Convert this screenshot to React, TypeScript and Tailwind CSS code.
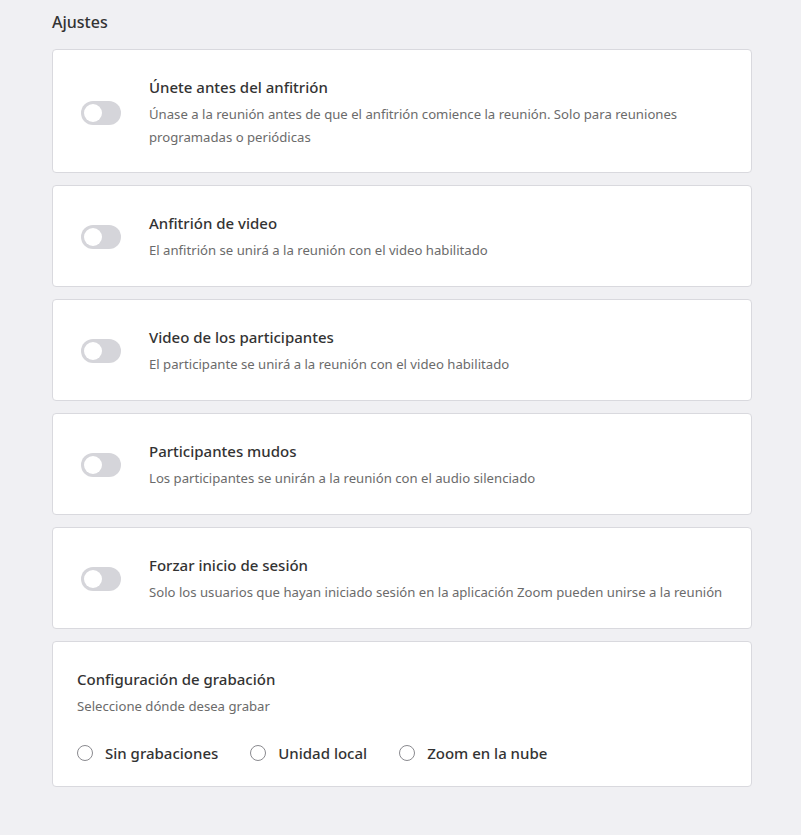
const settings = [
  {
    title: 'Únete antes del anfitrión',
    desc: 'Únase a la reunión antes de que el anfitrión comience la reunión. Solo para reuniones programadas o periódicas',
  },
  { title: 'Anfitrión de video', desc: 'El anfitrión se unirá a la reunión con el video habilitado' },
  { title: 'Video de los participantes', desc: 'El participante se unirá a la reunión con el video habilitado' },
  { title: 'Participantes mudos', desc: 'Los participantes se unirán a la reunión con el audio silenciado' },
  {
    title: 'Forzar inicio de sesión',
    desc: 'Solo los usuarios que hayan iniciado sesión en la aplicación Zoom pueden unirse a la reunión',
  },
]

const recordOptions = ['Sin grabaciones', 'Unidad local', 'Zoom en la nube']

function Toggle() {
  return (
    <div className="shrink-0 w-10 h-6 rounded-full bg-[#d5d5da] flex items-center px-[3px]">
      <div className="w-[18px] h-[18px] rounded-full bg-white" />
    </div>
  )
}

export default function App() {
  return (
    <div className="min-h-[835px] bg-[#f0f0f3] px-[52px] pt-[11px] pb-12 font-['Noto_Sans',sans-serif] text-[#333]">
      <h2 className="text-base font-medium leading-[22px] mb-4">Ajustes</h2>
      <div className="flex flex-col gap-3 w-[700px]">
        {settings.map((s, i) => (
          <div
            key={s.title}
            className={
              'bg-white border border-[#d9d9de] rounded-[4px] pl-7 pr-6 pt-[26px] flex items-center gap-7 ' +
              (i === 0 ? 'pb-[23px]' : 'pb-[24px]')
            }
          >
            <Toggle />
            <div>
              <div className="text-[15px] font-medium leading-[22px] text-[#333] mb-[5px]">{s.title}</div>
              <div className="text-[13.15px] leading-[23px] text-[#6b6b6b]">{s.desc}</div>
            </div>
          </div>
        ))}
        <div className="bg-white border border-[#d9d9de] rounded-[4px] px-6 pt-[26px] pb-[21px]">
          <div className="text-[15px] font-medium leading-[22px] text-[#333] mb-[6px]">Configuración de grabación</div>
          <div className="text-[13.15px] leading-[20px] text-[#6b6b6b]">Seleccione dónde desea grabar</div>
          <div className="flex items-center gap-8 mt-[25px]">
            {recordOptions.map((o) => (
              <label key={o} className="flex items-center gap-3 h-[24px]">
                <span className="w-4 h-4 rounded-full border border-[#8a8a8f] bg-white" />
                <span className="text-[15px] font-medium text-[#333]">{o}</span>
              </label>
            ))}
          </div>
        </div>
      </div>
    </div>
  )
}
